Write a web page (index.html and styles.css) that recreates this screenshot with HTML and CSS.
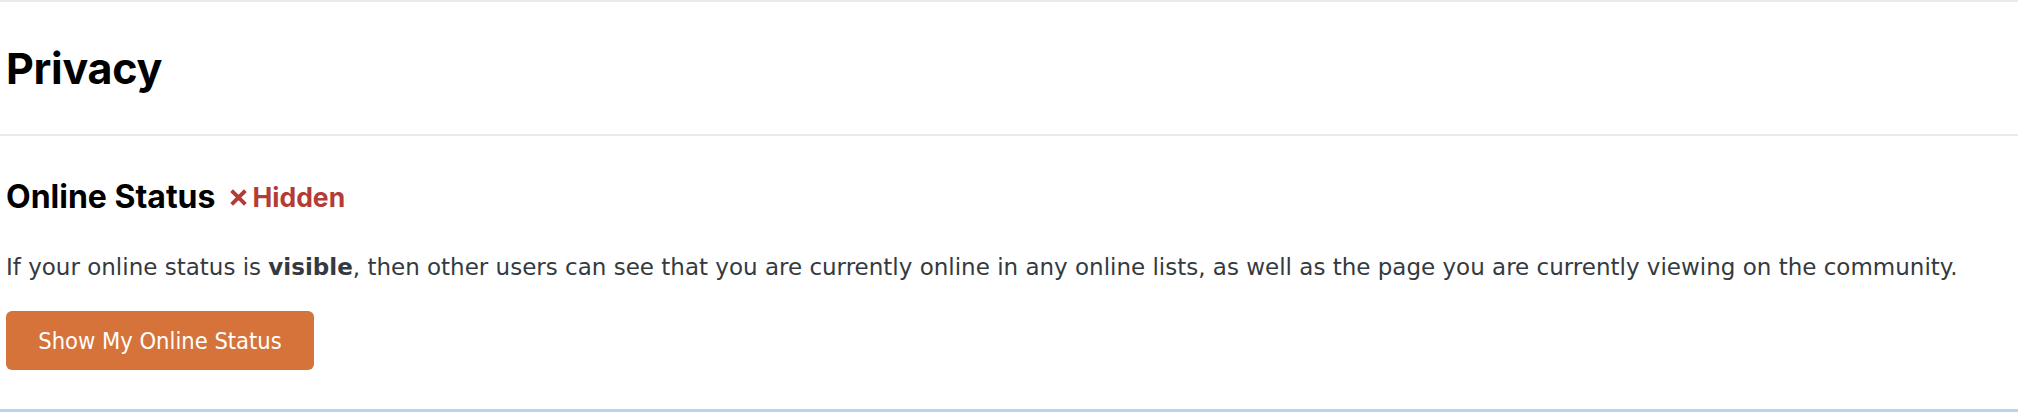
FILE: index.html
```html
<!DOCTYPE html>
<html lang="en">
<head>
<meta charset="utf-8">
<title>Privacy</title>
<link rel="stylesheet" href="styles.css">
</head>
<body>
  <header class="page-header">
    <h1 class="page-title">Privacy</h1>
  </header>
  <section class="setting">
    <div class="setting-head">
      <h2 class="setting-title">Online Status</h2>
      <span class="status status-hidden">
        <svg class="status-icon" viewBox="0 0 16 16" aria-hidden="true">
          <path d="M2.2 2.2 L13.8 13.8 M13.8 2.2 L2.2 13.8" stroke="currentColor" stroke-width="4.2" stroke-linecap="square" fill="none"/>
        </svg>
        Hidden
      </span>
    </div>
    <p class="setting-desc">If your online status is <strong>visible</strong>, then other users can see that you are currently online in any online lists, as well as the page you are currently viewing on the community.</p>
    <button class="btn-primary" type="button">Show My Online Status</button>
  </section>
</body>
</html>
```
FILE: styles.css
```css
html, body {
  margin: 0;
  padding: 0;
  background: #ffffff;
}

body {
  width: 2018px;
  height: 412px;
  overflow: hidden;
}

.page-header {
  border-top: 2px solid #e8e8ed;
  border-bottom: 2px solid #e8e8ed;
  padding: 44px 6px 44px;
}

.page-title {
  margin: 0;
  font-family: Inter, "Noto Sans", sans-serif;
  font-weight: 700;
  font-size: 43px;
  line-height: 44px;
  color: #000000;
  letter-spacing: -0.3px;
}

.setting {
  padding: 46px 6px 39px;
  border-bottom: 3px solid #b9d3f1;
}

.setting-head {
  display: flex;
  align-items: center;
  gap: 16px;
  height: 30px;
}

.setting-title {
  margin: 0;
  font-family: Inter, "Noto Sans", sans-serif;
  font-weight: 700;
  font-size: 32px;
  line-height: 30px;
  color: #000000;
}

.status {
  display: inline-flex;
  align-items: center;
  gap: 6px;
  font-family: Inter, "Noto Sans", sans-serif;
  font-weight: 700;
  font-size: 26.5px;
  line-height: 30px;
}

.status-hidden {
  color: #b33c36;
}

.status-icon {
  width: 15px;
  height: 15px;
  overflow: visible;
  margin-top: 1px;
}

.setting-desc {
  margin: 40px 0 0;
  font-family: "DejaVu Sans", sans-serif;
  font-size: 23px;
  line-height: 30px;
  color: #343a40;
}

.setting-desc strong {
  font-weight: 700;
}

.btn-primary {
  display: block;
  margin-top: 29px;
  width: 308px;
  height: 59px;
  padding: 0;
  border: none;
  border-radius: 6px;
  background: #d5733a;
  color: #ffffff;
  font-family: "DejaVu Sans Condensed", "DejaVu Sans", sans-serif;
  font-size: 23.5px;
  cursor: pointer;
}
```
